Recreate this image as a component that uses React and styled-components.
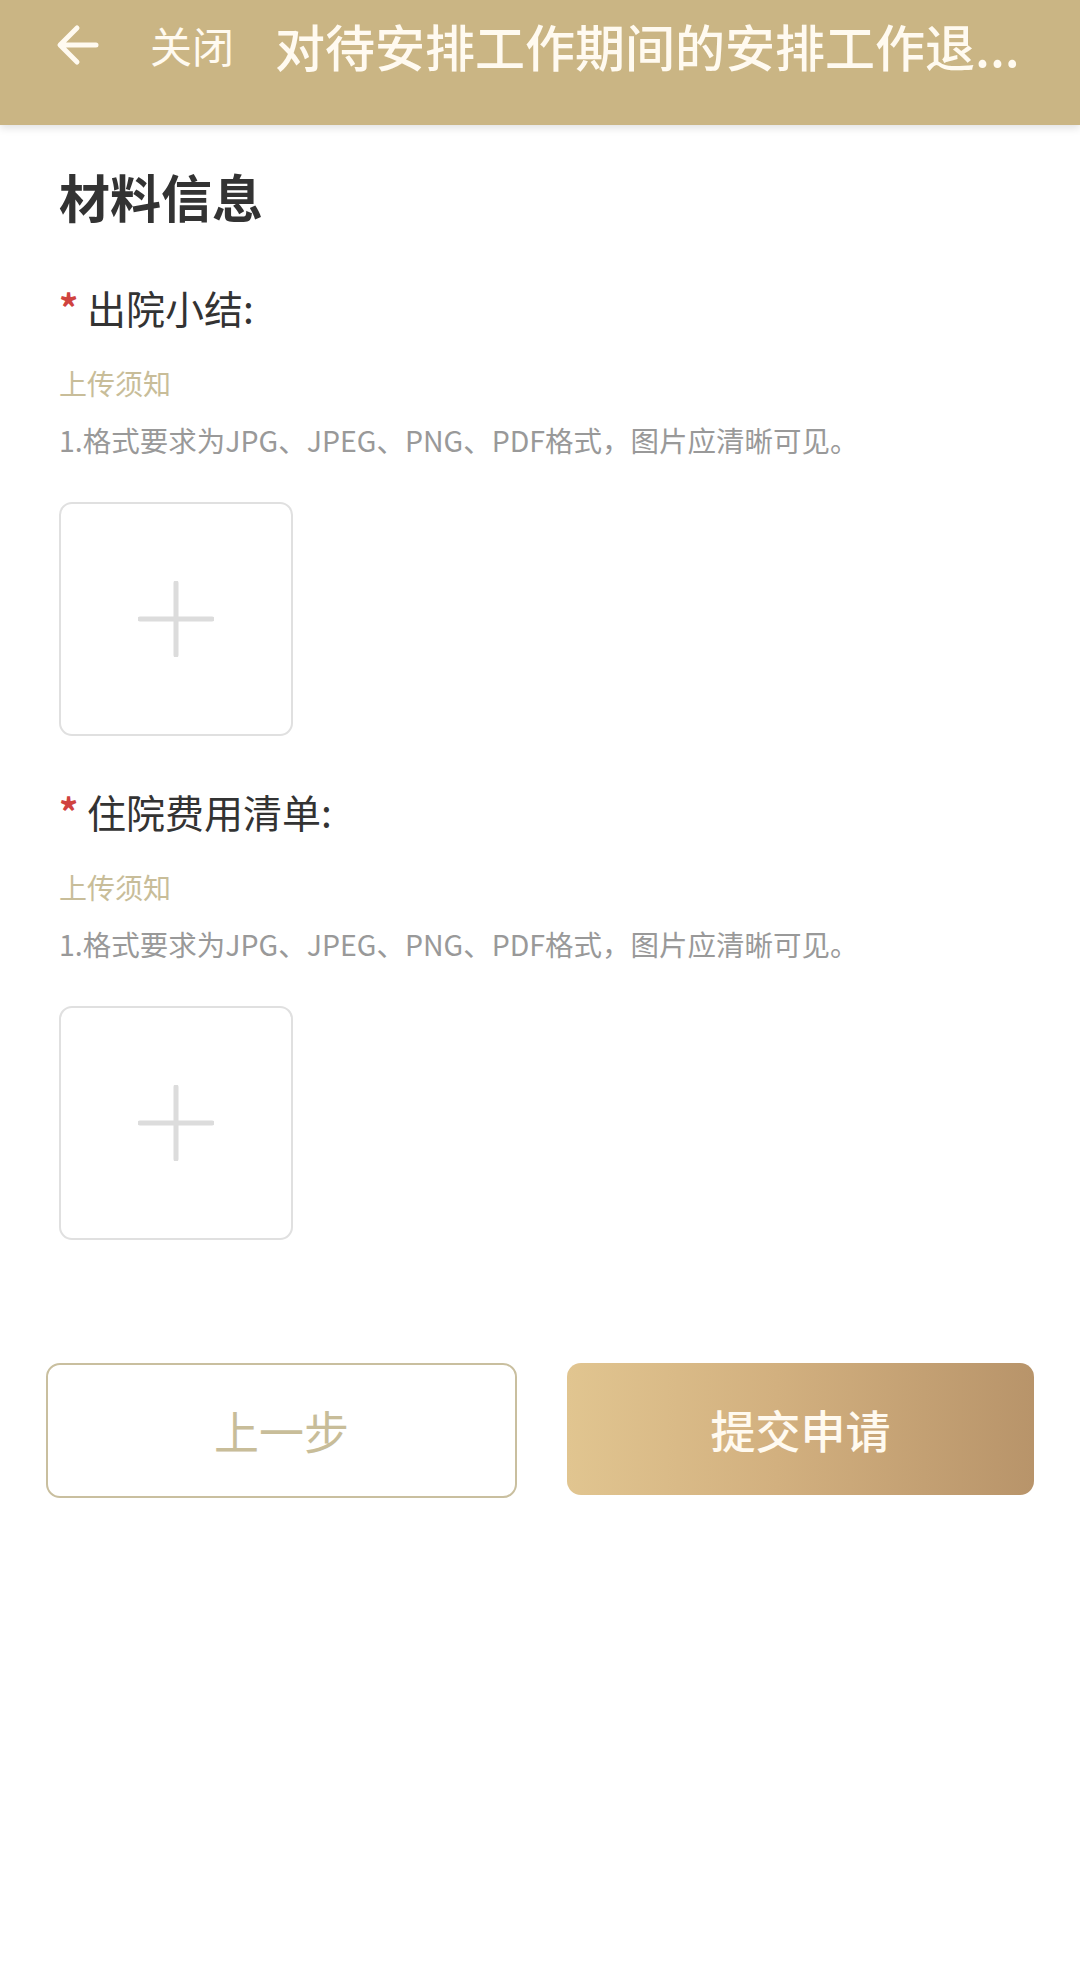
import React from 'react';
import styled, { createGlobalStyle } from 'styled-components';

const colors = {
    header: '#cab584',
    text: '#333333',
    tip: '#c8bd99',
    gray: '#999999',
    line: '#e0e0e0',
    red: '#d0433f',
    white: '#ffffff',
};

const GlobalStyle = createGlobalStyle`
    * { box-sizing: border-box; }
    body {
        margin: 0;
        background: ${colors.white};
        font-family: "Noto Sans CJK SC", "Noto Sans", sans-serif;
    }
`

const Page = styled.div`
    width: 1080px;
    min-height: 1963px;
    background: ${colors.white};
`

const Header = styled.div`
    height: 125px;
    background: ${colors.header};
    box-shadow: 0 3px 8px rgba(0, 0, 0, 0.12);
    padding: 0 40px 36px 56px;
    display: flex;
    align-items: center;
    color: ${colors.white};
`

const Back = styled.div`
    width: 44px;
    height: 44px;
    display: flex;
    flex-shrink: 0;
`

const Close = styled.div`
    margin-left: 50px;
    font-size: 42px;
    flex-shrink: 0;
    color: #fffaf0;
`

const Title = styled.div`
    margin-left: 41px;
    flex: 1;
    min-width: 0;
    font-size: 50px;
    font-weight: 500;
    white-space: nowrap;
    color: #fffaf0;
`

const Content = styled.div`
    padding: 36px 59px 0;
`

const SectionTitle = styled.div`
    font-size: 51px;
    font-weight: 700;
    line-height: 70px;
    color: ${colors.text};
`

const Field = styled.div`
    margin-top: ${p => p.$top}px;
`

const Label = styled.div`
    font-size: 39px;
    line-height: 56px;
    color: ${colors.text};
    display: flex;
    align-items: center;
`

const Star = styled.span`
    color: ${colors.red};
    font-size: 38px;
    font-weight: 700;
    width: 28px;
    margin-top: 0;
`

const Tip = styled.div`
    margin-top: 28px;
    font-size: 28px;
    line-height: 40px;
    color: ${colors.tip};
`

const Desc = styled.div`
    margin-top: 17px;
    font-size: 28.5px;
    line-height: 40px;
    color: ${colors.gray};
`

const Upload = styled.div`
    margin-top: 42px;
    width: 234px;
    height: 234px;
    border: 2px solid ${colors.line};
    border-radius: 13px;
    display: flex;
    align-items: center;
    justify-content: center;
`

const Buttons = styled.div`
    margin-top: 123px;
    padding: 0 46px;
    display: flex;
    gap: 50px;
    align-items: flex-start;
`

const PrevButton = styled.div`
    flex: 1;
    height: 135px;
    border: 2px solid #c9bf9f;
    border-radius: 14px;
    display: flex;
    align-items: center;
    justify-content: center;
    font-size: 45px;
    color: ${colors.tip};
`

const SubmitButton = styled.div`
    flex: 1;
    height: 132px;
    border-radius: 14px;
    background: linear-gradient(90deg, #e1c590 0%, #d2b07f 45%, #b8946a 100%);
    display: flex;
    align-items: center;
    justify-content: center;
    font-size: 45px;
    font-weight: 500;
    color: #fffaf0;
`

const ArrowIcon = () => (
    <svg width="44" height="44" viewBox="0 0 44 44" fill="none">
        <path d="M40 22H6M21 5L4 22l17 17" stroke="#fffaf0" strokeWidth="5" strokeLinecap="round" strokeLinejoin="round" />
    </svg>
)

const PlusIcon = () => (
    <svg width="76" height="76" viewBox="0 0 76 76">
        <path d="M38 2v72M2 38h72" stroke="#dcdcdc" strokeWidth="5" strokeLinecap="round" />
    </svg>
)

const UploadField = ({ label, top }) => (
    <Field $top={top}>
        <Label><Star>*</Star>{label}</Label>
        <Tip>上传须知</Tip>
        <Desc>1.格式要求为JPG、JPEG、PNG、PDF格式，图片应清晰可见。</Desc>
        <Upload><PlusIcon /></Upload>
    </Field>
)

const App = () => {
  return (
    <>
    <GlobalStyle />
    <Page>
        <Header>
            <Back><ArrowIcon /></Back>
            <Close>关闭</Close>
            <Title>对待安排工作期间的安排工作退...</Title>
        </Header>
        <Content>
            <SectionTitle>材料信息</SectionTitle>
            <UploadField label="出院小结:" top={48} />
            <UploadField label="住院费用清单:" top={47} />
        </Content>
        <Buttons>
            <PrevButton>上一步</PrevButton>
            <SubmitButton>提交申请</SubmitButton>
        </Buttons>
    </Page>
    </>
  )
}

export default App
